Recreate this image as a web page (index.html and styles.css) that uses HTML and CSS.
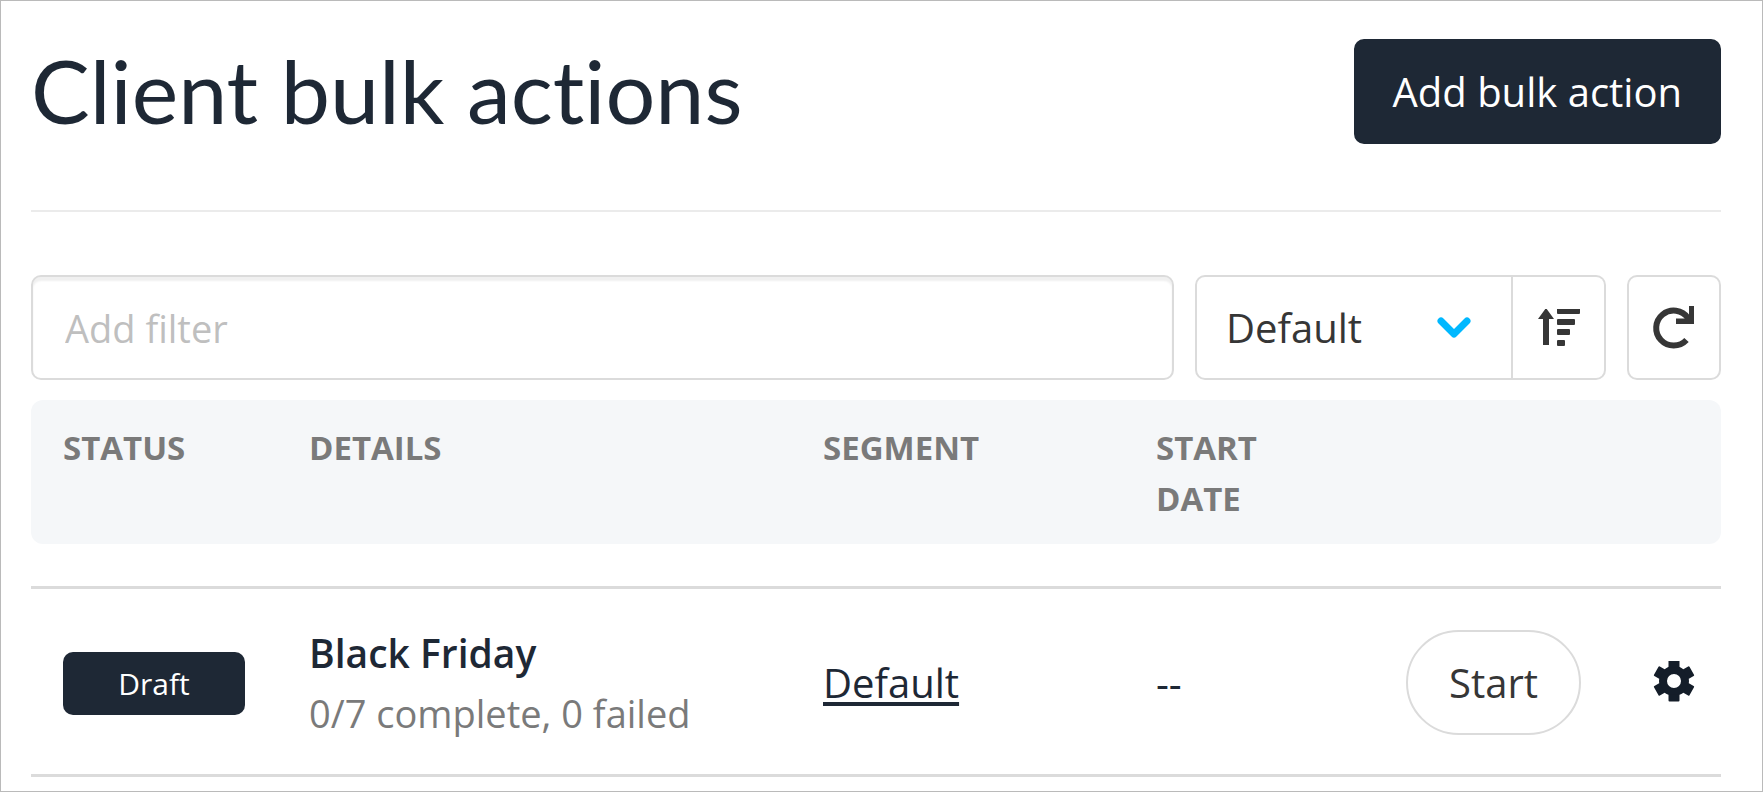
FILE: index.html
```html
<!DOCTYPE html>
<html lang="en">
  <head>
    <meta charset="UTF-8" />
    <title>Client bulk actions</title>
    <link rel="stylesheet" href="styles.css">
  </head>
  <body>
    <main class="page">
      <header class="page-header">
        <h1>Client bulk actions</h1>
        <button type="button" class="btn-primary">Add bulk action</button>
      </header>

      <!-- filter, sorting and refresh -->
      <div class="toolbar">
        <input type="text" class="filter" placeholder="Add filter" aria-label="Add filter" />
        <div class="sort-group">
          <div class="sort-select">
            <select aria-label="Sort by">
              <option>Default</option>
            </select>
            <svg class="chevron" width="34" height="22" viewBox="0 0 34 22" aria-hidden="true">
              <path d="M4 4l13 13L30 4" />
            </svg>
          </div>
          <button type="button" class="btn-sort" aria-label="Sort direction">
            <svg width="44" height="38" viewBox="0 1 44 38" aria-hidden="true">
              <path d="M9 0l8 11h-5v26h-6V11H1z" />
              <rect x="20" y="0" width="23" height="6" rx="1" />
              <rect x="20" y="11" width="18" height="6" rx="1" />
              <rect x="20" y="21" width="13" height="6" rx="1" />
              <rect x="20" y="32" width="8" height="6" rx="1" />
            </svg>
          </button>
        </div>
        <button type="button" class="btn-refresh" aria-label="Refresh">
          <svg width="44" height="44" viewBox="0 2 44 44" aria-hidden="true">
            <path class="arc" d="M34.500 36A17.500 17.500 0 1 1 36 14" />
            <path d="M37 2h5v18H24v-5.500h9l4-3z" />
          </svg>
        </button>
      </div>

      <table class="actions">
        <colgroup>
          <col class="col-status" />
          <col class="col-details" />
          <col class="col-segment" />
          <col class="col-date" />
          <col class="col-start" />
          <col />
        </colgroup>
        <thead>
          <tr>
            <th>Status</th>
            <th>Details</th>
            <th>Segment</th>
            <th>Start<br />date</th>
            <th></th>
            <th></th>
          </tr>
        </thead>
        <tbody>
          <tr>
            <td><span class="badge">Draft</span></td>
            <td>
              <div class="name">Black Friday</div>
              <div class="progress">0/7 complete, 0 failed</div>
            </td>
            <td><a href="#">Default</a></td>
            <td>--</td>
            <td><button type="button" class="btn-start">Start</button></td>
            <td class="cell-settings">
              <button type="button" class="btn-settings" aria-label="Settings">
                <svg width="42" height="42" viewBox="-21 -20 42 42" aria-hidden="true">
                  <circle r="11" />
                  <path d="M-5.500-19.500q0-1 1-1h9q1 0 1 1v6h-11z" />
                  <path d="M-5.500-19.500q0-1 1-1h9q1 0 1 1v6h-11z" transform="rotate(60)" />
                  <path d="M-5.500-19.500q0-1 1-1h9q1 0 1 1v6h-11z" transform="rotate(120)" />
                  <path d="M-5.500-19.500q0-1 1-1h9q1 0 1 1v6h-11z" transform="rotate(180)" />
                  <path d="M-5.500-19.500q0-1 1-1h9q1 0 1 1v6h-11z" transform="rotate(240)" />
                  <path d="M-5.500-19.500q0-1 1-1h9q1 0 1 1v6h-11z" transform="rotate(300)" />
                </svg>
              </button>
            </td>
          </tr>
        </tbody>
      </table>
    </main>
  </body>
</html>
```

FILE: styles.css
```css
* {
  box-sizing: border-box;
}
body {
  margin: 0;
  font-family: "Open Sans", "Noto Sans", sans-serif;
  font-size: 40px;
  color: #1e2835;
  background-color: #fff;
}
.page {
  min-height: 100vh;
  padding: 38px 41px 12px 30px;
  border: 1px solid #bababa;
}
button,
input,
select {
  font: inherit;
  color: #363636;
  border: 2px solid #dbdbdb;
  border-radius: 10px;
  background-color: #fff;
}
button,
select {
  cursor: pointer;
}
svg {
  display: block;
  fill: currentColor;
}

.page-header {
  display: flex;
  justify-content: space-between;
  align-items: flex-start;
  padding-bottom: 66px;
  border-bottom: 2px solid #ebebeb;
}
.page-header h1 {
  margin: 0;
  font-family: Lato, sans-serif;
  font-size: 88px;
  font-weight: 400;
  font-variant-ligatures: none;
  line-height: 102px;
}
.btn-primary {
  height: 105px;
  padding: 0 37px;
  border-color: #1e2835;
  color: #fff;
  background-color: #1e2835;
}

.toolbar {
  display: flex;
  gap: 21px;
  margin: 63px 0 20px;
}
.toolbar > * {
  height: 105px;
}
.filter {
  flex: 1;
  min-width: 0;
  padding: 0 32px;
  font-size: 38px;
  box-shadow: inset 0 4px 2px #f0f0f0;
}
.filter::placeholder {
  color: #bfbfbf;
  opacity: 1;
}
.sort-group {
  display: flex;
}
.sort-select {
  position: relative;
}
.sort-select select {
  width: 318px;
  height: 100%;
  padding: 0 29px;
  appearance: none;
  border-radius: 10px 0 0 10px;
}
.chevron {
  position: absolute;
  top: 42px;
  right: 42px;
  fill: none;
  stroke: #00b8ff;
  stroke-width: 7;
  stroke-linecap: round;
  stroke-linejoin: round;
  pointer-events: none;
}
.btn-sort,
.btn-refresh {
  display: flex;
  justify-content: center;
  align-items: center;
  width: 94px;
  padding: 0;
}
.btn-sort {
  width: 93px;
  border-left: 0;
  border-radius: 0 10px 10px 0;
}
.arc {
  fill: none;
  stroke: currentColor;
  stroke-width: 6;
}

.actions {
  width: 100%;
  table-layout: fixed;
  border-spacing: 0;
}
.col-status {
  width: 246px;
}
.col-details {
  width: 514px;
}
.col-segment {
  width: 333px;
}
.col-date {
  width: 250px;
}
.col-start {
  width: 239px;
}
th {
  padding: 22px 32px 20px;
  font-size: 33px;
  line-height: 51px;
  text-align: left;
  text-transform: uppercase;
  vertical-align: top;
  color: #7a7a7a;
  background-color: #f5f7f9;
}
th:first-child {
  border-radius: 12px 0 0 12px;
}
th:last-child {
  border-radius: 0 12px 12px 0;
}
/* space between the heading and the rows */
tbody::before {
  content: "";
  display: block;
  height: 42px;
}
td {
  height: 191px;
  padding: 2px 32px 0;
  border-top: 3px solid #dbdbdb;
  border-bottom: 3px solid #dbdbdb;
}
td a {
  color: inherit;
  text-decoration-thickness: 4px;
  text-underline-offset: 4px;
  text-decoration-skip-ink: none;
}
.badge {
  display: block;
  margin-top: 2px;
  border-radius: 10px;
  font-size: 30px;
  line-height: 63px;
  text-align: center;
  color: #fff;
  background-color: #1e2835;
}
.name {
  font-size: 39px;
  font-weight: 600;
  line-height: 61px;
}
.progress {
  font-size: 38px;
  line-height: 61px;
  color: #7a7a7a;
}
.btn-start {
  display: block;
  width: 100%;
  height: 105px;
  padding: 0;
  border-radius: 53px;
}
.cell-settings {
  padding: 0;
}
.btn-settings {
  display: flex;
  justify-content: center;
  align-items: center;
  width: 94px;
  height: 94px;
  margin-left: auto;
  padding: 0;
  border: 0;
  color: #141d29;
}
.btn-settings circle {
  fill: none;
  stroke: currentColor;
  stroke-width: 8;
}
```
